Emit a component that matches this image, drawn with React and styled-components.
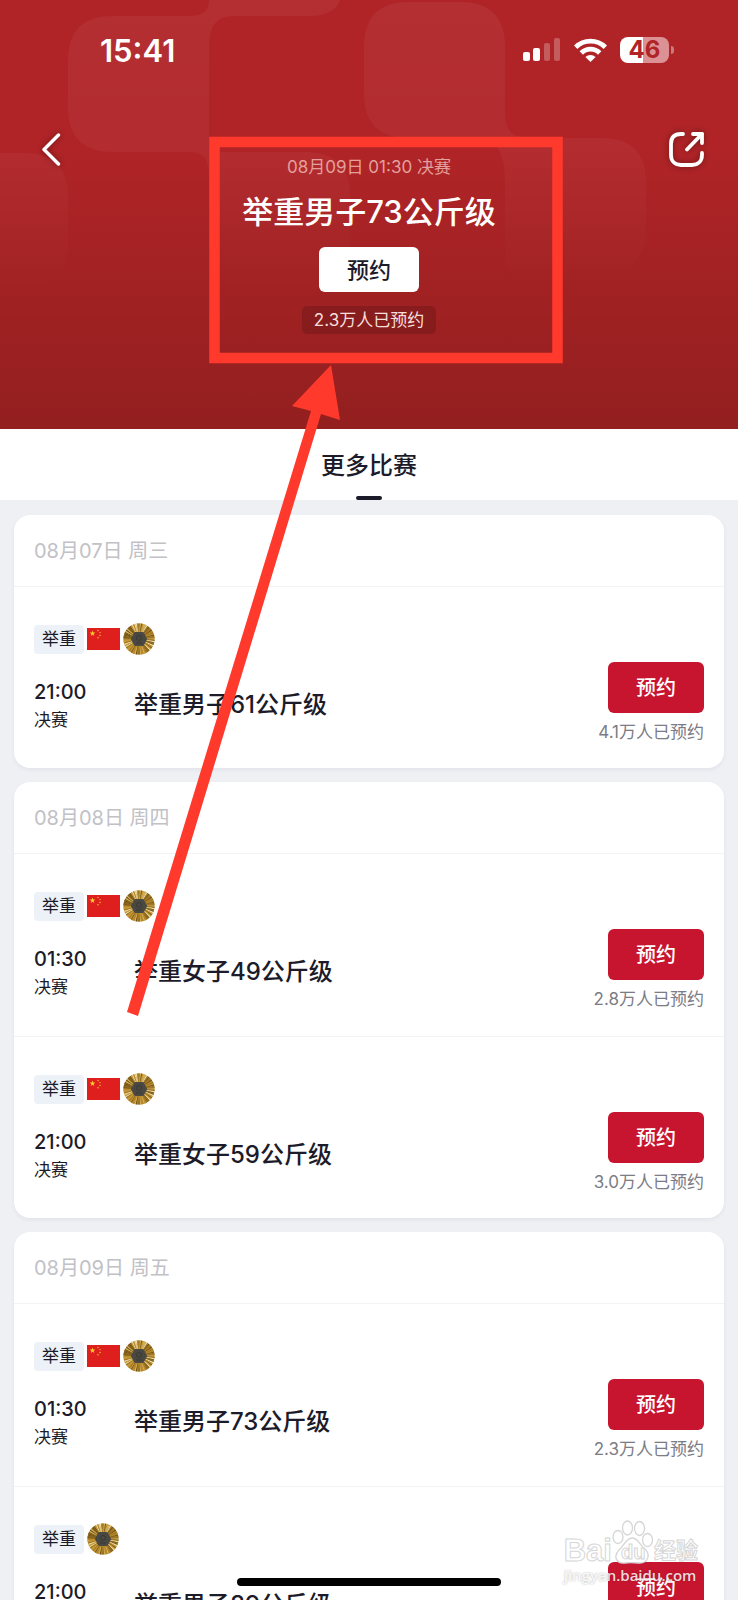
import React from "react";
import styled, { createGlobalStyle } from "styled-components";

const GlobalStyle = createGlobalStyle`
  * {
    box-sizing: border-box;
  }

  body {
    margin: 0;
    background: #eef0f4;
    color: #1c1b29;
    font-family: Inter, "Noto Sans CJK SC", sans-serif;
  }

  h1, h2, h3, p {
    margin: 0;
    font-weight: 500;
  }

  button {
    font-family: inherit;
    border: none;
    padding: 0;
    cursor: pointer;
  }
`;

const Screen = styled.div`
  position: relative;
  height: 100vh;
  overflow: hidden;
`;

const Hero = styled.header`
  position: relative;
  height: 429px;
  color: white;
  background: linear-gradient(#b02427 0%, #b02427 35%, #931f1f 100%);
`;

const Pattern = styled.svg`
  position: absolute;
  top: 0;
  left: 0;
  width: 100%;
  height: 100%;
`;

const StatusBar = styled.div`
  position: relative;
  display: flex;
  justify-content: space-between;
  align-items: center;
  height: 100px;
  padding: 0 64px 0 100px;
`;

const Clock = styled.span`
  font-size: 31px;
  font-weight: 600;
`;

const StatusIcons = styled.div`
  display: flex;
  align-items: center;
  gap: 13px;
`;

const Battery = styled.div`
  display: flex;
  align-items: center;
  gap: 2px;
`;

const BatteryBody = styled.span`
  width: 49px;
  height: 26px;
  border-radius: 8px;
  background: linear-gradient(90deg, #fff 47%, #dc9194 47%);
  color: #b02427;
  font-size: 24px;
  font-weight: 700;
  line-height: 26px;
  text-align: center;
`;

const BatteryCap = styled.span`
  width: 3px;
  height: 8px;
  border-radius: 0 3px 3px 0;
  background: #cc7a7c;
`;

const Toolbar = styled.div`
  position: relative;
  display: grid;
  grid-template-columns: 1fr auto 1fr;
  align-items: start;
  padding: 28px 30px 0;
`;

const IconButton = styled.button`
  display: flex;
  justify-self: ${({ $end }) => ($end ? "end" : "start")};
  padding-left: ${({ $end }) => ($end ? "0" : "6px")};
  background: none;
  color: white;
  filter: drop-shadow(0 0 3px rgba(0, 0, 0, 0.4));
`;

const Summary = styled.div`
  display: flex;
  flex-direction: column;
  align-items: center;
  padding-top: 27px;
`;

const EventTime = styled.p`
  font-size: 17px;
  font-weight: 400;
  line-height: 24px;
  color: #e3a09c;
`;

const EventTitle = styled.h1`
  margin: 13px 0 15px;
  font-size: 31px;
  line-height: 40px;
`;

const BookButton = styled.button`
  width: ${({ $light }) => ($light ? "100px" : "96px")};
  height: ${({ $light }) => ($light ? "45px" : "51px")};
  padding-bottom: ${({ $light }) => ($light ? "4px" : "2px")};
  border-radius: 6px;
  background: ${({ $light }) => ($light ? "#fff" : "#c8152f")};
  color: ${({ $light }) => ($light ? "#1c1b29" : "#fff")};
  font-size: ${({ $light }) => ($light ? "22px" : "20px")};
  font-weight: 500;
`;

const BookedPill = styled.p`
  margin-top: 14px;
  padding: 0 12px;
  border-radius: 5px;
  background: rgba(0, 0, 0, 0.14);
  color: #f6dfda;
  font-size: 17px;
  font-weight: 400;
  line-height: 28px;
`;

const TabBar = styled.nav`
  display: flex;
  justify-content: center;
  height: 71px;
  background: white;
`;

const Tab = styled.a`
  display: flex;
  flex-direction: column;
  align-items: center;
  justify-content: space-between;
  padding-top: 19px;
  color: inherit;
  font-size: 24px;
  font-weight: 500;
  line-height: 36px;
  text-decoration: none;

  &::after {
    content: "";
    width: 26px;
    height: 4px;
    border-radius: 2px;
    background: #1c1b29;
  }
`;

const DayList = styled.main`
  display: flex;
  flex-direction: column;
  gap: 14px;
  padding: 15px 14px;
`;

const DayCard = styled.section`
  border-radius: 16px;
  background: white;
  box-shadow: 0 2px 4px rgba(30, 40, 70, 0.06);
`;

const DayTitle = styled.h2`
  padding: 2px 20px 0;
  font-size: 20px;
  font-weight: 400;
  line-height: 69px;
  color: #c1c1c6;
`;

const Match = styled.article`
  height: 182px;
  padding: 36px 20px 0;
  box-shadow: inset 0 1px 0 #f2f3f5;

  & + & {
    margin-top: 1px;
  }
`;

const Badges = styled.div`
  display: flex;
  align-items: center;
  gap: 3px;
  height: 34px;
`;

const Sport = styled.span`
  padding: 0 8px;
  border-radius: 4px;
  background: #ecf2f7;
  font-size: 17px;
  line-height: 29px;
`;

const MatchBody = styled.div`
  display: flex;
`;

const When = styled.div`
  width: 100px;
  padding-top: 22px;
`;

const Time = styled.p`
  font-size: 20px;
  line-height: 28px;
`;

const Stage = styled.p`
  font-size: 17px;
  font-weight: 400;
  line-height: 28px;
`;

const MatchTitle = styled.h3`
  flex: 1;
  padding-top: 31px;
  font-size: 24px;
  line-height: 36px;
`;

const Booking = styled.div`
  display: flex;
  flex-direction: column;
  align-items: flex-end;
  padding-top: 6px;
`;

const BookedCount = styled.p`
  margin-top: 6px;
  font-size: 17px;
  font-weight: 400;
  line-height: 26px;
  color: #7b7c85;
`;

const HomeIndicator = styled.div`
  position: absolute;
  bottom: 14px;
  left: 50%;
  width: 264px;
  height: 8px;
  margin-left: -132px;
  border-radius: 4px;
  background: black;
`;

const Annotation = styled.svg`
  position: absolute;
  top: 0;
  left: 0;
  width: 100%;
  pointer-events: none;
`;

const Watermark = styled.div`
  position: absolute;
  right: 40px;
  bottom: 14px;
  color: rgba(255, 255, 255, 0.85);
  text-shadow: 0 0 2px rgba(0, 0, 0, 0.3);
`;

const WatermarkBrand = styled.div`
  display: flex;
  align-items: flex-end;
  justify-content: flex-end;
  font-family: "Liberation Sans", "Noto Sans CJK SC", sans-serif;
  font-size: 31px;
  font-weight: 700;
  line-height: 26px;
  color: white;
  -webkit-text-stroke: 1px #d6d6d6;
  text-shadow: none;

  small {
    font-size: 22px;
  }
`;

const WatermarkUrl = styled.div`
  font-family: "Open Sans", sans-serif;
  font-size: 15px;
  font-weight: 600;
  line-height: 22px;
`;

const days = [
  {
    date: "08月07日 周三",
    matches: [
      { time: "21:00", title: "举重男子61公斤级", booked: "4.1", china: true },
    ],
  },
  {
    date: "08月08日 周四",
    matches: [
      { time: "01:30", title: "举重女子49公斤级", booked: "2.8", china: true },
      { time: "21:00", title: "举重女子59公斤级", booked: "3.0", china: true },
    ],
  },
  {
    date: "08月09日 周五",
    matches: [
      { time: "01:30", title: "举重男子73公斤级", booked: "2.3", china: true },
      { time: "21:00", title: "举重男子89公斤级", china: false },
    ],
  },
];

const HeroPattern = () => (
  <Pattern viewBox="0 0 738 429" preserveAspectRatio="none" aria-hidden="true">
    <defs>
      <linearGradient id="fade" gradientUnits="userSpaceOnUse" x1="0" y1="0" x2="0" y2="290">
        <stop offset="0" stopColor="#fff" stopOpacity="0.05" />
        <stop offset="0.5" stopColor="#fff" stopOpacity="0.04" />
        <stop offset="1" stopColor="#fff" stopOpacity="0" />
      </linearGradient>
    </defs>
    <g fill="url(#fade)">
      <path d="M113 16H190Q209 16 209 0H340Q334 16 309 16H233Q209 16 209 45V152H305Q350 152 350 197V290H254Q209 290 209 245V175Q209 152 190 152H113Q68 152 68 107V61Q68 16 113 16Z" />
      <path d="M409 2H460Q505 2 505 47V115Q505 138 528 138H601Q646 138 646 183V229Q646 274 601 274H528Q505 274 505 260V183Q505 138 480 138H409Q364 138 364 93V47Q364 2 409 2Z" />
      <path d="M0 153H23Q68 153 68 198V243Q68 288 23 288H0Z" />
    </g>
  </Pattern>
);

const SignalIcon = () => (
  <svg width="38" height="24" viewBox="0 0 38 24" fill="#fff" aria-hidden="true">
    <rect x="0" y="14" width="7" height="9" rx="2" />
    <rect x="10" y="10" width="7" height="13" rx="2" />
    <rect x="21" y="5" width="6" height="18" rx="2" opacity="0.25" />
    <rect x="31" y="0" width="6" height="23" rx="2" opacity="0.25" />
  </svg>
);

const WifiIcon = () => (
  <svg width="33" height="24" viewBox="0 0 33 24" aria-hidden="true">
    <g fill="none" stroke="#fff" strokeWidth="4.8">
      <path d="M1.7 9.2A21 21 0 0 1 31.3 9.2" />
      <path d="M7.3 15A13 13 0 0 1 25.7 15" />
    </g>
    <path d="M16.5 24L11.4 18.9A7.5 7.5 0 0 1 21.6 18.9Z" fill="#fff" />
  </svg>
);

const BackIcon = () => (
  <svg width="30" height="40" viewBox="0 0 30 40" fill="none" stroke="currentColor" strokeWidth="3.4" strokeLinecap="round" strokeLinejoin="round">
    <path d="M22.5 7L8 21.5L22.5 36" />
  </svg>
);

const ShareIcon = () => (
  <svg width="43" height="43" viewBox="0 0 43 43" fill="none" stroke="currentColor" strokeWidth="3.8" strokeLinecap="round" strokeLinejoin="round">
    <path d="M18 6H16C9 6 6 10 6 16V27C6 33 10 37 16 37H27C33 37 37 33 37 27V25" />
    <path d="M28 6H37V15" />
    <path d="M37 6L22 21.5" />
  </svg>
);

const star = "0,-3 0.7,-0.9 2.9,-0.9 1.1,0.4 1.8,2.4 0,1.2 -1.8,2.4 -1.1,0.4 -2.9,-0.9 -0.7,-0.9";

const FlagIcon = () => (
  <svg width="33" height="22" viewBox="0 0 33 22" role="img" aria-label="中国">
    <rect width="33" height="22" fill="#de1f1e" />
    <g fill="#f8cf2c">
      <polygon points={star} transform="translate(5.5 5.5)" />
      <circle cx="11" cy="2.5" r="0.7" />
      <circle cx="13" cy="4.6" r="0.7" />
      <circle cx="13" cy="7.5" r="0.7" />
      <circle cx="11" cy="9.8" r="0.7" />
    </g>
  </svg>
);

const rayColors = ["#80601c", "#c99a35", "#efdfae", "#9c7526", "#b98a2a", "#6e5218", "#d8b864"];

const MedalIcon = () => (
  <svg width="32" height="32" viewBox="-16 -16 32 32" aria-hidden="true">
    <circle r="15.5" fill="#b0852d" />
    {Array.from({ length: 72 }, (_, i) => (
      <path
        key={i}
        d="M0 0L-0.6 -15.6H0.6Z"
        fill={rayColors[(i * 5 + (i % 4) * (i % 3)) % 7]}
        transform={`rotate(${i * 5})`}
      />
    ))}
    <polygon points="-3.5,-5.5 3.5,-5.5 6.5,0 3.5,5.5 -3.5,5.5 -6.5,0" fill="#4a4842" stroke="#4a4842" strokeWidth="3" strokeLinejoin="round" />
    <circle cy="-1" r="2.5" fill="none" stroke="#3a3935" />
    <path d="M-3 4H3" stroke="#3a3935" />
  </svg>
);

const PawIcon = () => (
  <svg width="42" height="44" viewBox="0 0 42 44" aria-hidden="true">
    <g fill="#fff" stroke="#d6d6d6" strokeWidth="1.3">
      <ellipse cx="6" cy="17" rx="5" ry="6.5" />
      <ellipse cx="15.5" cy="8" rx="5" ry="7" />
      <ellipse cx="27.5" cy="8.5" rx="5" ry="7" />
      <ellipse cx="35.5" cy="20" rx="5" ry="6.5" />
      <path d="M20 18C26 18 27 24 32 28C40 35 35 43 28 43C23 43 18 42 13 43C4 44 1 36 7 30C12 26 14 18 20 18Z" />
    </g>
    <text x="9" y="39" fontFamily="Liberation Sans, sans-serif" fontSize="20" fontWeight="700" fill="#fff" stroke="#d6d6d6">du</text>
  </svg>
);

const MatchRow = ({ match }) => (
  <Match>
    <Badges>
      <Sport>举重</Sport>
      {match.china && <FlagIcon />}
      <MedalIcon />
    </Badges>
    <MatchBody>
      <When>
        <Time>{match.time}</Time>
        <Stage>决赛</Stage>
      </When>
      <MatchTitle>{match.title}</MatchTitle>
      <Booking>
        <BookButton>预约</BookButton>
        {match.booked && <BookedCount>{match.booked}万人已预约</BookedCount>}
      </Booking>
    </MatchBody>
  </Match>
);

const App = () => {
  return (
    <Screen lang="zh-CN">
      <GlobalStyle />
      <Hero>
        <HeroPattern />
        <StatusBar>
          <Clock>15:41</Clock>
          <StatusIcons>
            <SignalIcon />
            <WifiIcon />
            <Battery>
              <BatteryBody>46</BatteryBody>
              <BatteryCap />
            </Battery>
          </StatusIcons>
        </StatusBar>
        <Toolbar>
          <IconButton aria-label="返回">
            <BackIcon />
          </IconButton>
          <Summary>
            <EventTime>08月09日 01:30 决赛</EventTime>
            <EventTitle>举重男子73公斤级</EventTitle>
            <BookButton $light>预约</BookButton>
            <BookedPill>2.3万人已预约</BookedPill>
          </Summary>
          <IconButton $end aria-label="分享">
            <ShareIcon />
          </IconButton>
        </Toolbar>
      </Hero>
      <TabBar>
        <Tab href="#more">更多比赛</Tab>
      </TabBar>
      <DayList id="more">
        {days.map((day) => (
          <DayCard key={day.date}>
            <DayTitle>{day.date}</DayTitle>
            {day.matches.map((match) => (
              <MatchRow key={match.title} match={match} />
            ))}
          </DayCard>
        ))}
      </DayList>
      <HomeIndicator />
      <Annotation viewBox="0 0 738 1600" aria-hidden="true">
        <rect x="214.5" y="142" width="343" height="216" fill="none" stroke="#ff3a2d" strokeWidth="10.5" />
        <path d="M331 365L340 420L321 414L138 1016L127 1012L311 411L292 406Z" fill="#ff3a2d" />
      </Annotation>
      <Watermark>
        <WatermarkBrand>
          Bai
          <PawIcon />
          <small>经验</small>
        </WatermarkBrand>
        <WatermarkUrl>jingyan.baidu.com</WatermarkUrl>
      </Watermark>
    </Screen>
  );
};

export default App;
